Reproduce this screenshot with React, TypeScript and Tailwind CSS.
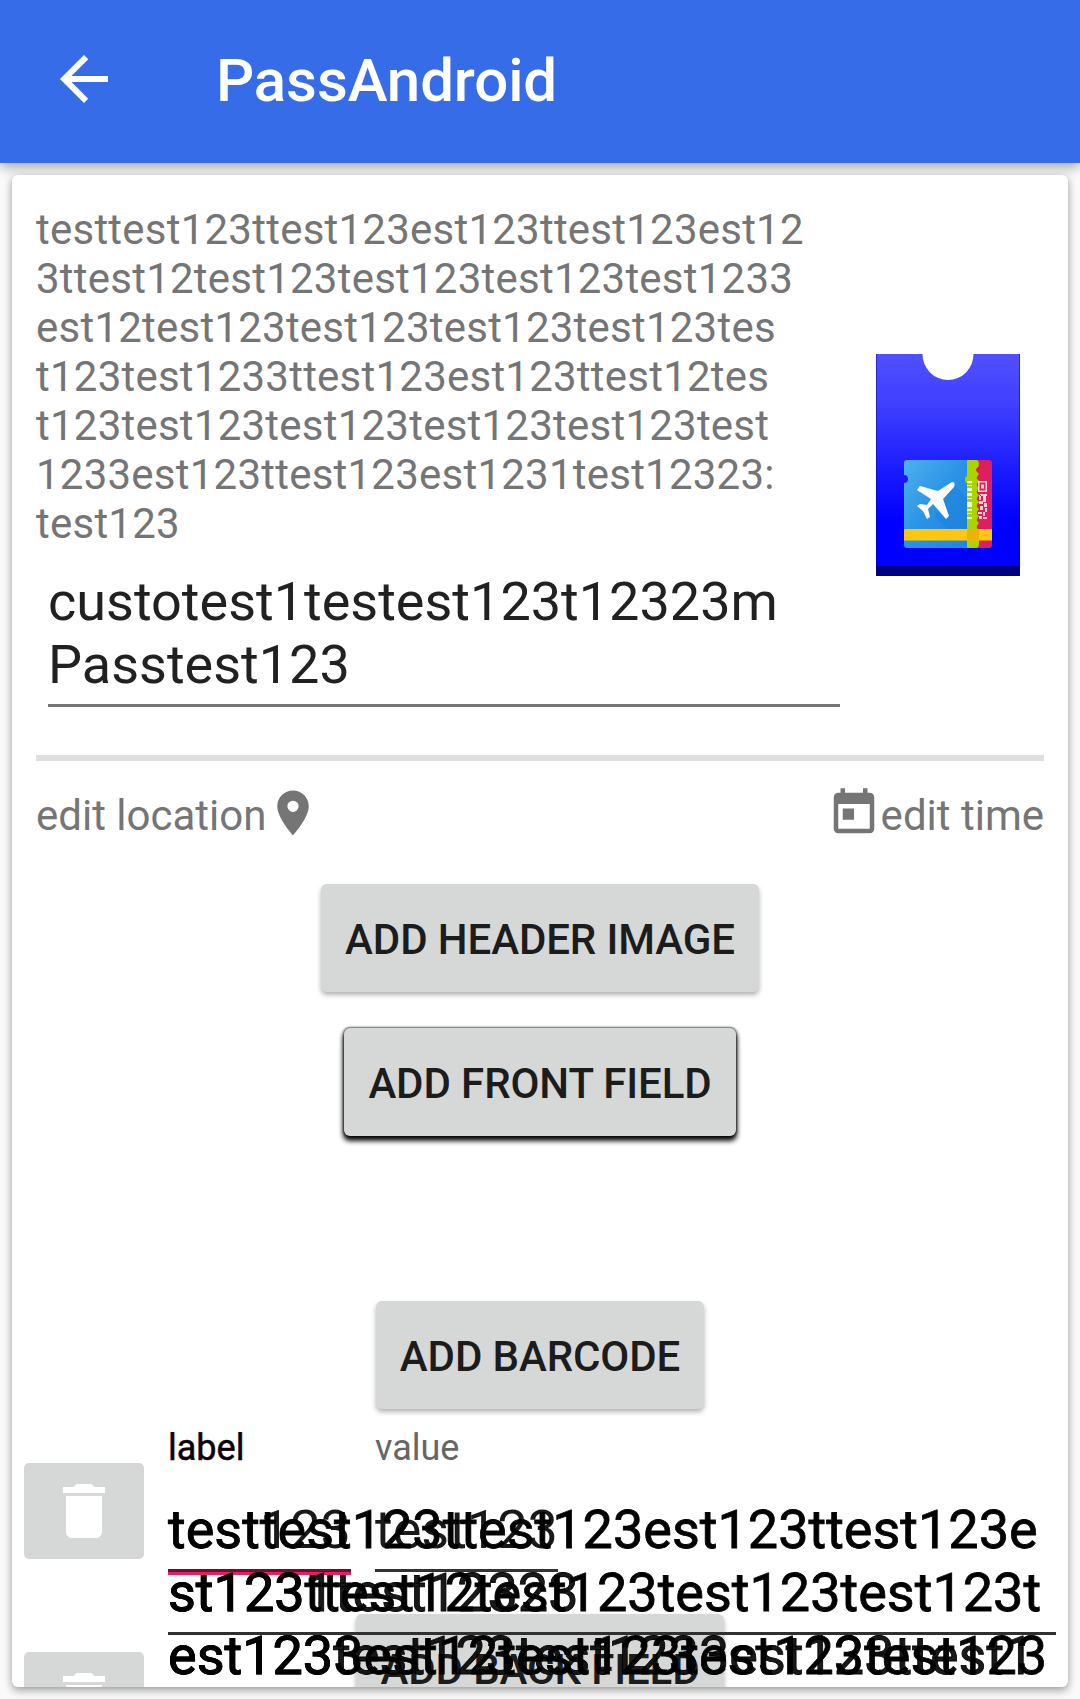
import React from "react";

const trashPath =
  "M6 19c0 1.1.9 2 2 2h8c1.1 0 2-.9 2-2V7H6v12zM19 4h-3.5l-1-1h-5l-1 1H5v2h14V4z";

function MaterialButton({ label, focused = false }: { label: string; focused?: boolean }) {
  return (
    <button
      className={
        "h-[108px] shrink-0 rounded-[6px] bg-[#d6d7d7] px-6 pt-[2px] text-[42px] leading-[49px] font-medium tracking-[-0.1px] whitespace-nowrap text-[#1c1c1c] " +
        (focused
          ? "shadow-[0_0_2px_1px_rgba(0,0,0,0.55),0_4px_5px_1px_rgba(0,0,0,0.95)]"
          : "shadow-[0_3px_5px_0_rgba(0,0,0,0.3)]")
      }
    >
      {label}
    </button>
  );
}

function DeleteButton() {
  return (
    <button className="flex h-24 w-[120px] shrink-0 items-start justify-center rounded-[5px] bg-[#d6d7d7] pt-3">
      <svg viewBox="0 0 24 24" className="size-[72px]" fill="#fff">
        <path d={trashPath} />
      </svg>
    </button>
  );
}

function PassIcon() {
  return (
    <svg viewBox="0 0 144 222" className="h-[222px] w-36">
      <defs>
        <linearGradient id="pass" x1="0" y1="0" x2="0" y2="1">
          <stop offset="0" stopColor="#5050ff" />
          <stop offset="0.22" stopColor="#4040ff" />
          <stop offset="0.75" stopColor="#0000ff" />
          <stop offset="1" stopColor="#0000ff" />
        </linearGradient>
        <linearGradient id="ticket" x1="0" y1="0" x2="1" y2="1">
          <stop offset="0" stopColor="#4fb0ee" />
          <stop offset="0.5" stopColor="#2a93e6" />
          <stop offset="1" stopColor="#1e86e0" />
        </linearGradient>
      </defs>
      <rect width="144" height="222" fill="url(#pass)" />
      <rect y="212" width="144" height="10" fill="#000080" />
      <path d="M.5 0v212M143.500 0v212" stroke="#0000b0" strokeOpacity=".5" />
      <path d="M46.500 0a25.500 26 0 0 0 51 0z" fill="#fff" />
      <g>
        <path d="M98 106h15a3 3 0 0 1 3 3v82a3 3 0 0 1-3 3H98z" fill="#e01e5f" />
        <path
          d="M88 106h13q2 1 2 4q0 3-2 4q-2 2 0 4l2 2q-3 3-2 5l2 2q-3 3-2 5l2 2q-3 3-2 5l2 2q-3 3-2 5l2 2q-3 3-2 5l2 2q-3 3-2 5l2 2q-3 3-2 5l2 2q-3 3-2 5l2 2v14q0 4-3 4H88z"
          fill="#aad400"
        />
        <path
          d="M31 106h60v16a4 4 0 0 0 0 7v65H31a3 3 0 0 1-3-3v-62a4 4 0 0 0 0-8v-12a3 3 0 0 1 3-3z"
          fill="url(#ticket)"
        />
        <path d="m78 130 13 14v31H72L58 163z" fill="#1976d2" opacity=".3" />
        <rect x="28" y="175" width="88" height="11.500" fill="#ffc60f" />
        <path d="M91 175h12v11.500H91z" fill="#eab308" />
        <path
          d="M76 128q4 0 2 5L67 145l6 17-3 3-13-15-5 5 2 8-3 2-4-8-6-5 3-2 7 1 4-6-14-9 3-4 18 5z"
          fill="#fff"
        />
        <path
          d="M91 127h5v2h-5zM91 131h5v1h-5zM91 134h5v3h-5zM91 139h5v3h-5zM91 144h5v1h-5zM91 148h5v5h-5zM91 155h5v2h-5zM91 159h5v1h-5zM91 163h5v2h-5z"
          fill="#f4f6c8"
        />
        <path
          d="M102 127h9v11h-9zm1.500 1.500v8h6v-8zm1.500 2h3v4h-3zM104 140h7v2h-7zM107 142h3v6h-3zM103 141h2v5h-2zM103 147h4v3h-4zM108 149h3v4h-3zM104 152h3v4h-3zM109 154h2v4h-2zM102 158h4v2h-4zM107 158h2v4h-2zM103 162h3v3h-3zM107 163h4v2h-4z"
          fill="#f9d5d8"
          fillRule="evenodd"
        />
      </g>
    </svg>
  );
}

const fieldLayers: { lines: string[]; tone: string }[] = [
  {
    lines: [
      "",
      "st1231test12323",
      "est123test123test1233est123ttest1",
    ],
    tone: "text-black/90",
  },
  {
    lines: [
      "testtest123ttest123est123ttest123e",
      "st123ttest12test123test123test123t",
      "est1233est12test123test123test123",
    ],
    tone: "text-black",
  },
];

export default function App() {
  return (
    <div className="flex h-[1699px] w-[1080px] flex-col overflow-hidden bg-[#fafafa] font-['Roboto',sans-serif]">
      <header className="relative z-0 flex h-[163px] shrink-0 items-center bg-[#366ce8] px-12 pb-[5px] shadow-[0_4px_12px_rgba(0,0,0,0.35)]">
        <svg viewBox="0 0 24 24" className="size-[72px]" fill="#fff">
          <path d="M20 11H7.830l5.590-5.590L12 4l-8 8 8 8 1.410-1.410L7.830 13H20v-2z" />
        </svg>
        <h1 className="mt-[3px] ml-24 text-[60px] leading-[70px] font-medium tracking-[-0.1px] text-white">
          PassAndroid
        </h1>
      </header>

      <main className="relative mx-3 mt-3 flex h-[1512px] shrink-0 flex-col overflow-clip rounded-[6px] bg-white shadow-[0_3px_8px_rgba(0,0,0,0.4)]">
        <section className="flex h-[580px] shrink-0 px-6">
          <div className="w-[828px] shrink-0 pt-[30px]">
            <p className="text-[42px] leading-[49px] tracking-[0.23px] whitespace-pre text-[#757575]">
              {"testtest123ttest123est123ttest123est12\n3ttest12test123test123test123test1233\nest12test123test123test123test123tes\nt123test1233ttest123est123ttest12tes\nt123test123test123test123test123test\n1233est123ttest123est1231test12323:\ntest123"}
            </p>
            <div className="ml-3 flex h-[159px] w-[792px] flex-col justify-end border-b-[3px] border-[#757575] pb-2 text-[54px] leading-[63px] whitespace-pre text-[#212121]">
              {"custotest1testest123t12323m\nPasstest123"}
            </div>
          </div>
          <div className="ml-3 pt-[179px]">
            <PassIcon />
          </div>
        </section>
        <hr className="mx-6 h-1.5 shrink-0 border-0 bg-[#dedede]" />

        <section className="mx-6 mt-[25px] flex h-[54px] shrink-0 items-center justify-between text-[42px] leading-[49px] text-[#757575]">
          <div className="flex items-center">
            <span className="pt-[5px]">edit location</span>
            <svg viewBox="0 0 24 24" className="size-[54px]" fill="#757575">
              <path d="M12 2C8.130 2 5 5.130 5 9c0 5.250 7 13 7 13s7-7.750 7-13c0-3.870-3.130-7-7-7zm0 9.500a2.500 2.500 0 1 1 0-5 2.500 2.500 0 0 1 0 5z" />
            </svg>
          </div>
          <div className="flex items-center">
            <svg viewBox="0 0 24 24" className="size-[54px]" fill="#757575">
              <path d="M19 3h-1V1h-2v2H8V1H6v2H5c-1.110 0-1.990.9-1.990 2L3 19c0 1.100.890 2 2 2h14c1.100 0 2-.9 2-2V5c0-1.100-.9-2-2-2zm0 16H5V8h14v11zM7 10h5v5H7z" />
            </svg>
            <span className="pt-[5px]">edit time</span>
          </div>
        </section>

        <div className="mt-11 flex shrink-0 flex-col items-center">
          <MaterialButton label="ADD HEADER IMAGE" />
          <div className="mt-9 flex">
            <MaterialButton label="ADD FRONT FIELD" focused />
          </div>
          <div className="mt-[165px] flex">
            <MaterialButton label="ADD BARCODE" />
          </div>
          <div className="mt-[205px] flex">
            <MaterialButton label="ADD BACK FIELD" />
          </div>
        </div>

        {/* Field rows float above the barcode and back-field buttons */}
        <div className="absolute top-[1252px] left-3 flex w-[1032px]">
          <div className="flex flex-col gap-[93px] pt-9">
            <DeleteButton />
            <DeleteButton />
          </div>
          <div className="relative ml-6 h-[280px] w-[888px]">
            <div className="flex gap-6">
              <div className="w-[183px]">
                <div className="text-[36px] leading-[42px] text-[#0a0003] [-webkit-text-stroke:0.5px_#0a0003]">
                  label
                </div>
                <div className="mt-[29px] h-[71px] text-[54px] leading-[63px] text-black/90">test123</div>
                <div className="h-1.5 border-t-[3px] border-[#6b1030] bg-[#e91e63]" />
              </div>
              <div className="w-[183px]">
                <div className="text-[36px] leading-[42px] text-[#666]">value</div>
                <div className="mt-[29px] h-[71px] text-[54px] leading-[63px] text-black/90">test123</div>
                <div className="h-[3px] bg-[#333]" />
              </div>
            </div>
            {fieldLayers.map((layer, i) => (
              <div
                key={i}
                className={
                  "absolute top-[71px] left-0 text-[54px] leading-[63px] whitespace-pre [-webkit-text-stroke:0.8px_black] " +
                  layer.tone
                }
              >
                {layer.lines.map((line, j) => (
                  <div key={j} className="h-[63px]">
                    {line}
                  </div>
                ))}
              </div>
            ))}
            <div className="absolute top-[205px] left-0 h-[3px] w-[888px] bg-[#303032]" />
          </div>
        </div>
      </main>
    </div>
  );
}
